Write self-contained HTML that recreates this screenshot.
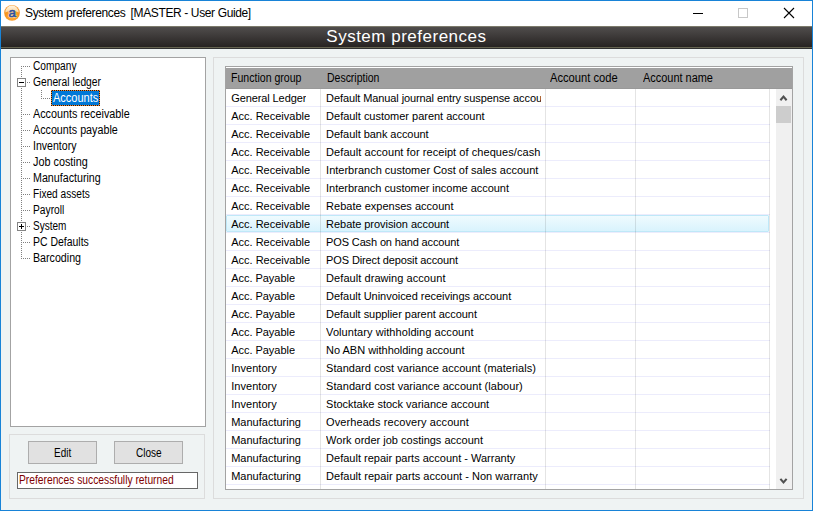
<!DOCTYPE html>
<html><head><meta charset="utf-8">
<style>
html,body{margin:0;padding:0;}
body{width:813px;height:511px;overflow:hidden;background:#eff3f3;font-family:"Liberation Sans",sans-serif;position:relative;}
.abs{position:absolute;box-sizing:border-box;}
#win{left:0;top:0;width:813px;height:511px;border:1px solid #1883d7;}
#title{left:1px;top:1px;width:811px;height:25px;background:#fff;}
#ttext{left:25px;top:6px;font-size:12px;color:#000;white-space:nowrap;line-height:15px;}
#band{left:1px;top:26px;width:811px;height:21px;background:linear-gradient(#504d4c,#272322);border-top:1px solid #7c7a6b;}
#bandline{left:1px;top:47px;width:811px;height:2px;background:#303030;border-top:1px solid #666451;}
#btext{left:326.3px;top:25.5px;height:22px;color:#fff;font-size:17px;line-height:21px;white-space:nowrap;}
#tree{left:10px;top:57px;width:196px;height:370px;background:#fff;border:1px solid #a3a3a3;}
.ti{transform-origin:0 0;position:absolute;font-size:12px;line-height:16px;height:16px;white-space:nowrap;color:#000;}
.ti.sel{color:#fff;}
.tsel{width:49px;height:16px;background:repeating-linear-gradient(90deg,#f8862a 0 1px,#1c1c1c 1px 2px) top left/100% 1px no-repeat,repeating-linear-gradient(90deg,#1c1c1c 0 1px,#f8862a 1px 2px) bottom left/100% 1px no-repeat,repeating-linear-gradient(180deg,#f8862a 0 1px,#1c1c1c 1px 2px) top left/1px 100% no-repeat,repeating-linear-gradient(180deg,#f8862a 0 1px,#1c1c1c 1px 2px) top right/1px 100% no-repeat,#0078d7;}
.dot{position:absolute;}
#bp{left:9px;top:434px;width:196px;height:65px;border:1px solid #dcdcdc;}
.btn{background:#e1e1e1;border:1px solid #adadad;font-size:12px;height:23px;width:69px;top:441px;}
.btn span{transform-origin:0 0;position:absolute;top:4px;line-height:14px;white-space:nowrap;}
#status{left:17px;top:472px;width:181px;height:17px;background:#fff;border:1px solid #676767;}
#st{transform-origin:0 0;position:absolute;left:1px;top:0px;font-size:12px;color:#800000;line-height:14px;white-space:nowrap;}
#rp{left:213px;top:57px;width:591px;height:442px;border:1px solid #dcdcdc;}
#grid{left:225px;top:66px;width:568px;height:424px;background:#fff;border:1px solid #a3a3a3;overflow:hidden;}
#ghead{left:0;top:0;width:566px;height:22px;background:#a0a0a0;border-top:1px solid #fff;border-bottom:1px solid #999;}
.h{transform-origin:0 0;position:absolute;top:3px;font-size:12px;line-height:14px;white-space:nowrap;color:#000;}
.row{position:absolute;left:0;width:544px;height:18px;border-bottom:1px solid #ececfc;box-sizing:border-box;font-size:11px;line-height:19px;white-space:nowrap;}
#hl{position:absolute;box-sizing:border-box;left:0;top:148px;width:543px;height:17px;background:linear-gradient(#effbfe,#d9f3fd);border:1px solid #bfe8f8;border-radius:1px;}
.row span{position:absolute;top:0;height:17px;overflow:hidden;}
.row .a{left:5.2px;}
.row .b{left:100.1px;width:214.9px;}
.vl{position:absolute;top:22px;width:1px;height:400px;background:rgba(0,0,0,0.105);}
#sb{left:550px;top:22px;width:16px;height:400px;background:#f0f0f0;}
#thumb{left:0px;top:17px;width:15px;height:17px;background:#cdcdcd;}
</style></head><body>
<div id="win" class="abs"></div>
<div id="title" class="abs"></div>
<svg class="abs" style="left:0px;top:0px" width="26" height="26" viewBox="0 0 26 26"><defs><radialGradient id="g" cx="0.5" cy="0.7" r="0.75"><stop offset="0" stop-color="#ffb347"/><stop offset="0.55" stop-color="#f8951e"/><stop offset="0.8" stop-color="#f59227"/><stop offset="1" stop-color="#fbb866"/></radialGradient><linearGradient id="gl" x1="0" y1="0" x2="0" y2="1"><stop offset="0" stop-color="#fff6e4" stop-opacity="1"/><stop offset="1" stop-color="#fcdcab" stop-opacity="0.9"/></linearGradient></defs><circle cx="12" cy="12.85" r="7.85" fill="url(#g)"/><path d="M5.3 12.4A6.7 6.9 0 0 1 18.7 12.4Q12 9.6 5.3 12.4Z" fill="url(#gl)"/><text x="12.3" y="16.8" text-anchor="middle" style="font-family:'Liberation Sans',sans-serif;font-size:13.5px" stroke="#fde2b4" stroke-opacity="0.75" stroke-width="1.8" fill="#fde2b4">a</text><text x="12.3" y="16.8" text-anchor="middle" style="font-family:'Liberation Sans',sans-serif;font-size:13.5px" stroke="#2f519f" stroke-width="0.55" fill="#2f519f">a</text></svg>
<div id="ttext" class="abs"><span id="tt1" style="position:absolute;left:0;top:0;letter-spacing:-0.345px">System preferences </span><span id="tt2" style="position:absolute;left:105.6px;top:0;letter-spacing:-0.373px">[MASTER - User Guide]</span></div>
<svg class="abs" style="left:680px;top:1px" width="131" height="25" viewBox="0 0 131 25">
<path d="M13 12.5h10" stroke="#000" stroke-width="1" fill="none"/>
<rect x="58.5" y="7.5" width="9" height="9" stroke="#c8c8c8" stroke-width="1" fill="none"/>
<path d="M104 7l10 10M114 7l-10 10" stroke="#000" stroke-width="1.1" fill="none"/>
</svg>
<div id="band" class="abs"></div><div id="bandline" class="abs"></div>
<div id="btext" class="abs" style="letter-spacing:0.503px">System preferences</div>

<div id="tree" class="abs"></div>
<svg class="abs" style="left:10px;top:57px" width="60" height="220" viewBox="10 57 60 220" shape-rendering="crispEdges">
<g stroke="#808080" stroke-width="1" stroke-dasharray="1 1" fill="none">
<path d="M21.5 66v193"/>
<path d="M21 66.5h9M27 82.5h3M21 114.5h9M21 130.5h9M21 146.5h9M21 162.5h9M21 178.5h9M21 194.5h9M21 210.5h9M27 226.5h3M21 242.5h9M21 258.5h9"/>
<path d="M41.5 90v9M41 98.5h9"/>
</g>
<g fill="#fff" stroke="#848484" stroke-width="1"><rect x="17.5" y="78.5" width="8" height="8"/><rect x="17.5" y="222.5" width="8" height="8"/></g>
<g stroke="#000" stroke-width="1"><path d="M19 82.5h5M19 226.5h5M21.5 224v5"/></g>
</svg>
<div id="treeitems" class="abs" style="left:0;top:0;">
<div class="ti" id="t0" style="left:33.4px;top:58px;transform:scaleX(0.8472)">Company</div>
<div class="ti" id="t1" style="left:33.4px;top:74px;transform:scaleX(0.8558)">General ledger</div>
<div class="tsel abs" style="left:51px;top:90px"></div>
<div class="ti sel" id="t2" style="left:52.7px;top:90px;transform:scaleX(0.9176)">Accounts</div>
<div class="ti" id="t3" style="left:33.1px;top:106px;transform:scaleX(0.9009)">Accounts receivable</div>
<div class="ti" id="t4" style="left:33.1px;top:122px;transform:scaleX(0.8947)">Accounts payable</div>
<div class="ti" id="t5" style="left:33.4px;top:138px;transform:scaleX(0.8802)">Inventory</div>
<div class="ti" id="t6" style="left:32.8px;top:154px;transform:scaleX(0.9034)">Job costing</div>
<div class="ti" id="t7" style="left:33.4px;top:170px;transform:scaleX(0.8908)">Manufacturing</div>
<div class="ti" id="t8" style="left:33.4px;top:186px;transform:scaleX(0.8435)">Fixed assets</div>
<div class="ti" id="t9" style="left:33.4px;top:202px;transform:scaleX(0.8528)">Payroll</div>
<div class="ti" id="t10" style="left:33.4px;top:218px;transform:scaleX(0.8339)">System</div>
<div class="ti" id="t11" style="left:33.4px;top:234px;transform:scaleX(0.8720)">PC Defaults</div>
<div class="ti" id="t12" style="left:33.4px;top:250px;transform:scaleX(0.8892)">Barcoding</div>
</div>

<div id="bp" class="abs"></div>
<div class="abs btn" style="left:28px;"><span id="b0" style="left:25px;transform:scaleX(0.8289)">Edit</span></div>
<div class="abs btn" style="left:114px;"><span id="b1" style="left:21px;transform:scaleX(0.8358)">Close</span></div>
<div id="status" class="abs"><span id="st" style="transform:scaleX(0.8555)">Preferences successfully returned</span></div>

<div id="rp" class="abs"></div>
<div id="grid" class="abs">
<div id="ghead" class="abs">
<span class="h" id="h0" style="left:5.4px;transform:scaleX(0.8799)">Function group</span>
<span class="h" id="h1" style="left:101.3px;transform:scaleX(0.8731)">Description</span>
<span class="h" id="h2" style="left:323.5px;transform:scaleX(0.9302)">Account code</span>
<span class="h" id="h3" style="left:416.5px;transform:scaleX(0.9118)">Account name</span>
</div>
<div id="hl"></div>
<div id="rows">
<div class="row" style="top:22px"><span class="a" id="ra0" style="letter-spacing:-0.097px">General Ledger</span><span class="b" id="rb0" style="letter-spacing:-0.100px">Default Manual journal entry suspense account</span></div>
<div class="row" style="top:40px"><span class="a" id="ra1" style="letter-spacing:0.006px">Acc. Receivable</span><span class="b" id="rb1" style="letter-spacing:-0.015px">Default customer parent account</span></div>
<div class="row" style="top:58px"><span class="a" id="ra2" style="letter-spacing:0.006px">Acc. Receivable</span><span class="b" id="rb2" style="letter-spacing:-0.043px">Default bank account</span></div>
<div class="row" style="top:76px"><span class="a" id="ra3" style="letter-spacing:0.006px">Acc. Receivable</span><span class="b" id="rb3" style="letter-spacing:0.064px">Default account for receipt of cheques/cash</span></div>
<div class="row" style="top:94px"><span class="a" id="ra4" style="letter-spacing:0.006px">Acc. Receivable</span><span class="b" id="rb4" style="letter-spacing:0.002px">Interbranch customer Cost of sales account</span></div>
<div class="row" style="top:112px"><span class="a" id="ra5" style="letter-spacing:0.006px">Acc. Receivable</span><span class="b" id="rb5" style="letter-spacing:-0.034px">Interbranch customer income account</span></div>
<div class="row" style="top:130px"><span class="a" id="ra6" style="letter-spacing:0.006px">Acc. Receivable</span><span class="b" id="rb6" style="letter-spacing:0.008px">Rebate expenses account</span></div>
<div class="row hl" style="top:148px"><span class="a" id="ra7" style="letter-spacing:0.006px">Acc. Receivable</span><span class="b" id="rb7" style="letter-spacing:-0.047px">Rebate provision account</span></div>
<div class="row" style="top:166px"><span class="a" id="ra8" style="letter-spacing:0.006px">Acc. Receivable</span><span class="b" id="rb8" style="letter-spacing:-0.137px">POS Cash on hand account</span></div>
<div class="row" style="top:184px"><span class="a" id="ra9" style="letter-spacing:0.006px">Acc. Receivable</span><span class="b" id="rb9" style="letter-spacing:-0.126px">POS Direct deposit account</span></div>
<div class="row" style="top:202px"><span class="a" id="ra10" style="letter-spacing:-0.033px">Acc. Payable</span><span class="b" id="rb10" style="letter-spacing:0.061px">Default drawing account</span></div>
<div class="row" style="top:220px"><span class="a" id="ra11" style="letter-spacing:-0.033px">Acc. Payable</span><span class="b" id="rb11" style="letter-spacing:-0.037px">Default Uninvoiced receivings account</span></div>
<div class="row" style="top:238px"><span class="a" id="ra12" style="letter-spacing:-0.033px">Acc. Payable</span><span class="b" id="rb12" style="letter-spacing:-0.045px">Default supplier parent account</span></div>
<div class="row" style="top:256px"><span class="a" id="ra13" style="letter-spacing:-0.033px">Acc. Payable</span><span class="b" id="rb13" style="letter-spacing:0.068px">Voluntary withholding account</span></div>
<div class="row" style="top:274px"><span class="a" id="ra14" style="letter-spacing:-0.033px">Acc. Payable</span><span class="b" id="rb14" style="letter-spacing:-0.018px">No ABN withholding account</span></div>
<div class="row" style="top:292px"><span class="a" id="ra15" style="letter-spacing:0.045px">Inventory</span><span class="b" id="rb15" style="letter-spacing:0.015px">Standard cost variance account (materials)</span></div>
<div class="row" style="top:310px"><span class="a" id="ra16" style="letter-spacing:0.045px">Inventory</span><span class="b" id="rb16" style="letter-spacing:0.043px">Standard cost variance account (labour)</span></div>
<div class="row" style="top:328px"><span class="a" id="ra17" style="letter-spacing:0.045px">Inventory</span><span class="b" id="rb17" style="letter-spacing:-0.006px">Stocktake stock variance account</span></div>
<div class="row" style="top:346px"><span class="a" id="ra18" style="letter-spacing:-0.000px">Manufacturing</span><span class="b" id="rb18" style="letter-spacing:0.083px">Overheads recovery account</span></div>
<div class="row" style="top:364px"><span class="a" id="ra19" style="letter-spacing:-0.000px">Manufacturing</span><span class="b" id="rb19" style="letter-spacing:-0.003px">Work order job costings account</span></div>
<div class="row" style="top:382px"><span class="a" id="ra20" style="letter-spacing:-0.000px">Manufacturing</span><span class="b" id="rb20" style="letter-spacing:0.000px">Default repair parts account - Warranty</span></div>
<div class="row" style="top:400px"><span class="a" id="ra21" style="letter-spacing:-0.000px">Manufacturing</span><span class="b" id="rb21" style="letter-spacing:0.032px">Default repair parts account - Non warranty</span></div>
<div class="row" style="top:418px"><span class="a" id="ra22" style="letter-spacing:0.000px"></span><span class="b" id="rb22" style="letter-spacing:0.000px"></span></div>
</div>
<div class="vl" style="left:94px"></div>
<div class="vl" style="left:319px"></div>
<div class="vl" style="left:409px"></div>
<div class="vl" style="left:543px"></div>
<div id="sb" class="abs"><div id="thumb" class="abs"></div>
<svg class="abs" style="left:0;top:0" width="16" height="17"><path d="M4.4 11.2L7.5 7.6L10.6 11.2" stroke="#505050" stroke-width="2.1" fill="none"/></svg>
<svg class="abs" style="left:0;top:384px" width="16" height="16"><path d="M4.4 5.9L7.5 9.5L10.6 5.9" stroke="#505050" stroke-width="2.1" fill="none"/></svg>
</div>
</div>
</body></html>
